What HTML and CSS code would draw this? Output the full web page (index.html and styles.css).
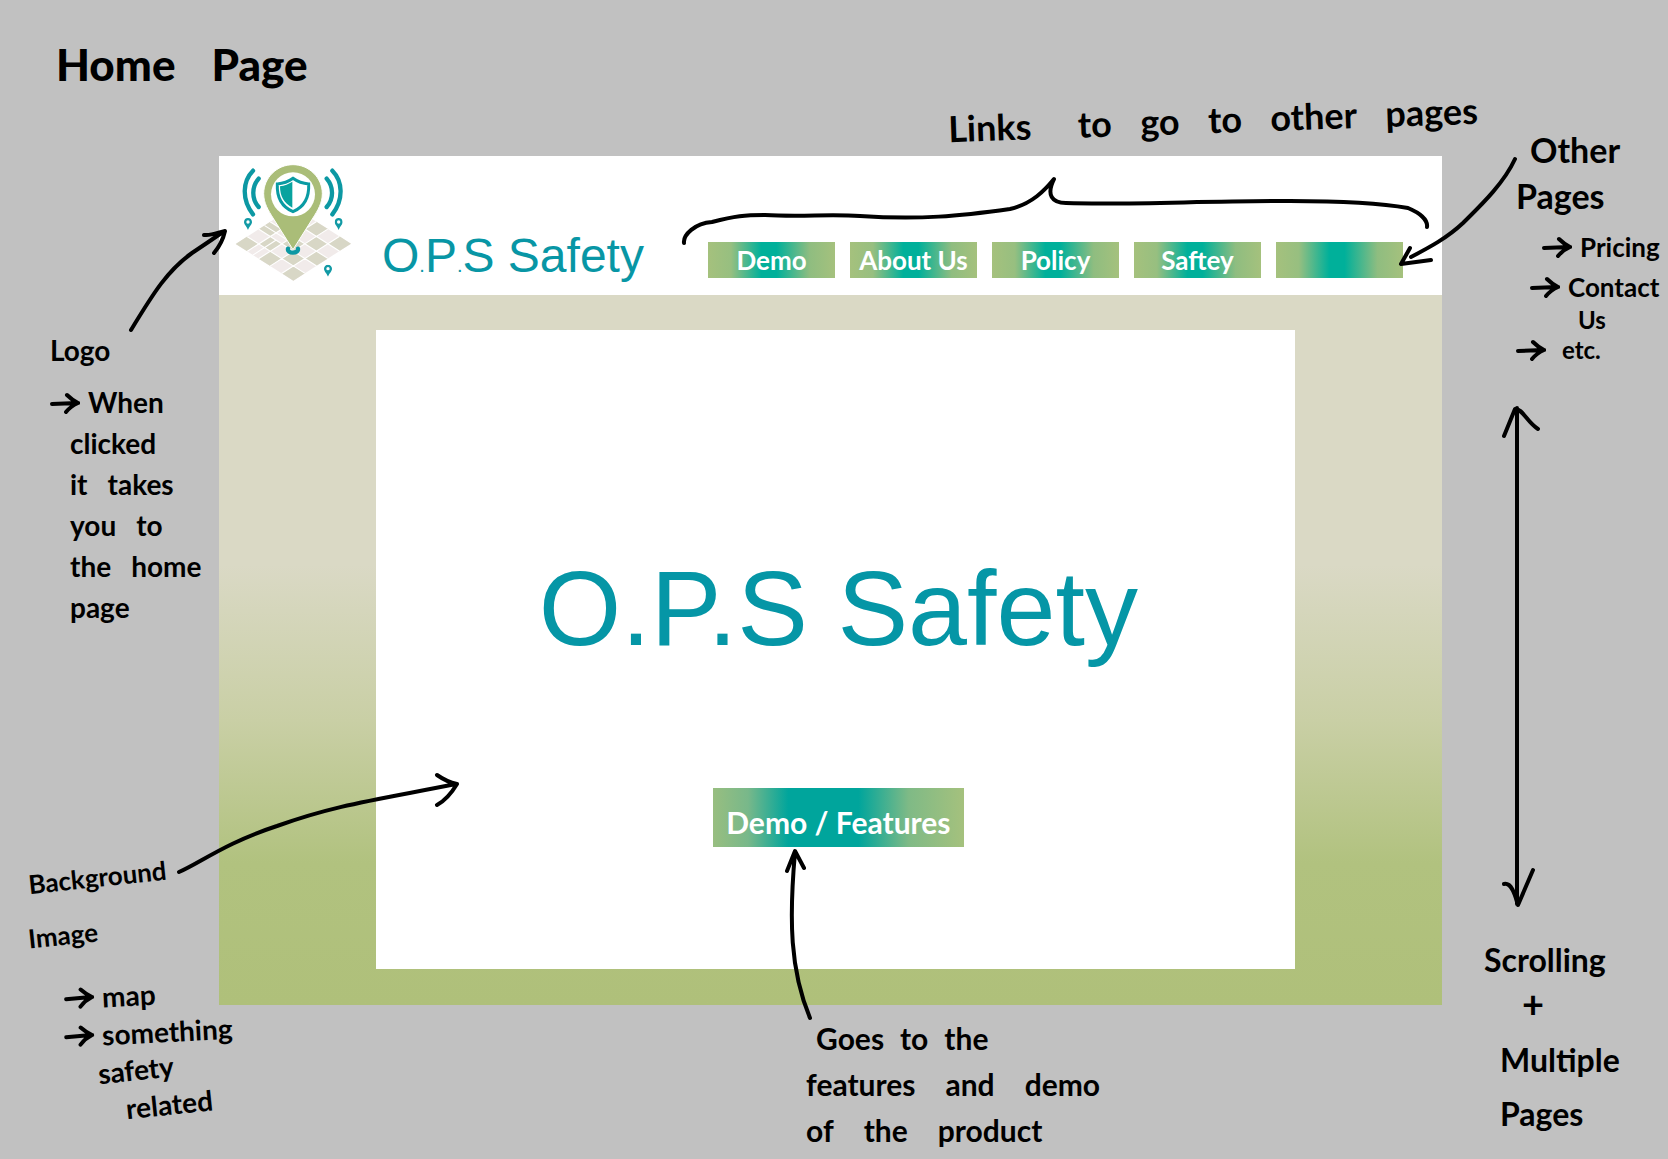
FILE: index.html
```html
<!DOCTYPE html>
<html lang="en">
<head>
<meta charset="utf-8">
<meta name="viewport" content="width=device-width, initial-scale=1">
<title>Home Page</title>
<link rel="stylesheet" href="styles.css">
</head>
<body>
<svg class="defs" aria-hidden="true">
  <symbol id="arrow" viewBox="0 0 30 24"><path d="M2 13 L27 12 M17 4 Q22 9 28 12 Q21 15 16 21"/></symbol>
  <symbol id="pin" viewBox="0 0 24 36"><path fill-rule="evenodd" d="M12 0C5 0 0 5 0 12c0 8 8 13 12 24 4-11 12-16 12-24C24 5 19 0 12 0zm0 7a5 5 0 1 1 0 10 5 5 0 0 1 0-10z"/></symbol>
</svg>
<div class="board">
  <aside class="notes notes-left">
    <h1 class="board-title"><span>Home</span> <span>Page</span></h1>
    <section class="note logo-note">
      <p class="line in-1">Logo</p>
      <p class="line in-1"><svg class="arrow"><use href="#arrow"/></svg> When</p>
      <p class="line in-2">clicked</p>
      <p class="line in-2 wide"><span>it</span> <span>takes</span></p>
      <p class="line in-2 wide"><span>you</span> <span>to</span></p>
      <p class="line in-2 wide"><span>the</span> <span>home</span></p>
      <p class="line in-2">page</p>
    </section>
    <section class="note image-note">
      <p class="line big tilt-more">Background</p>
      <p class="line big tilt-more">Image</p>
      <p class="line in-3 tilt"><svg class="arrow"><use href="#arrow"/></svg> map</p>
      <p class="line in-3 tilt"><svg class="arrow"><use href="#arrow"/></svg> something</p>
      <p class="line in-4 tilt-more">safety</p>
      <p class="line in-5 tilt-more">related</p>
    </section>
  </aside>

  <p class="links-note"><span>Links</span> <span>to</span> <span>go</span> <span>to</span> <span>other</span> <span>pages</span></p>

  <main class="mock">
    <header class="mock-header">
      <a class="brand" href="#home">
        <svg class="logo" viewBox="0 3 420 405" role="img" aria-label="O.P.S Safety logo">
          <g transform="matrix(34.6 -22.2 -34.6 -22 205 377)" class="tiles">
            <path class="pale" d="M0 0h5v5H0z"/>
            <path class="sand" d="M0 0h1v1H0zM2 0h1v1H2zM4 0h1v1H4zM1 1h1v1H1zM3 1h1v1H3zM0 2h1v1H0zM2 2h1v1H2zM4 2h1v1H4zM1 3h1v1H1zM3 3h1v1H3zM0 4h1v1H0zM2 4h1v1H2zM4 4h1v1H4z"/>
            <path class="streets" d="M1 0v5M2 0v5M3 0v5M4 0v5M0 1h5M0 2h5M0 3h5M0 4h5M2.500 3v2M0 3.500h2"/>
          </g>
          <path class="pin-body" d="M204 29c-48 0-88 39-88 87 0 28 13 49 30 76l58 92 58-92c17-27 30-48 30-76 0-48-40-87-88-87z"/>
          <circle cx="204" cy="118" r="66" fill="#fff"/>
          <path class="shield" d="M204 70c15 11 31 16 47 17 2 42-14 69-47 83-33-14-49-41-47-83 16-1 32-6 47-17z"/>
          <path fill="#08a39f" d="M202 80v78c-25-13-37-34-37-64 14-2 26-7 37-14z"/>
          <path class="waves" d="M84 47C53 78 49 133 84 178M101 71c-21 24-22 60 0 85M322 47c31 31 35 86 0 131M305 71c21 24 22 60 0 85"/>
          <path class="waves" d="M189 281c-3 16 32 16 30 0"/>
          <g fill="#129aa5"><use href="#pin" x="57" y="189" width="24" height="36"/><use href="#pin" x="329" y="189" width="24" height="36"/><use href="#pin" x="297" y="329" width="24" height="36"/></g>
        </svg>
        <span class="brand-name">O<small>.</small>P<small>.</small>S Safety</span>
      </a>
      <nav class="nav">
        <a class="tab" href="#demo">Demo</a>
        <a class="tab" href="#about">About Us</a>
        <a class="tab" href="#policy">Policy</a>
        <a class="tab" href="#safety">Saftey</a>
        <a class="tab" href="#more" aria-label="More pages"></a>
      </nav>
    </header>
    <section class="stage">
      <div class="card">
        <h2 class="card-title">O.P.S Safety</h2>
        <button class="cta" type="button">Demo / Features</button>
      </div>
    </section>
  </main>

  <section class="note demo-note">
    <p class="lead"><span>Goes</span> <span>to</span> <span>the</span></p>
    <p class="loose"><span>features</span> <span>and</span> <span>demo</span></p>
    <p class="loose"><span>of</span> <span>the</span> <span>product</span></p>
  </section>

  <aside class="notes notes-right">
    <section class="note pages-note">
      <p class="heading in-2">Other</p>
      <p class="heading in-1">Pages</p>
      <p class="line in-3"><svg class="arrow"><use href="#arrow"/></svg> Pricing</p>
      <p class="line contact in-2"><svg class="arrow"><use href="#arrow"/></svg> Contact</p>
      <p class="line short in-4">Us</p>
      <p class="line short in-1"><svg class="arrow"><use href="#arrow"/></svg> etc.</p>
    </section>
    <section class="note scroll-note">
      <p>Scrolling</p>
      <p class="plus">+</p>
      <p class="inset">Multiple</p>
      <p class="inset">Pages</p>
    </section>
  </aside>

  <svg class="pointers" viewBox="0 0 1668 1159" preserveAspectRatio="none" aria-hidden="true">
    <path d="M131 330C154 292 168 270 192 253Q207 243 223 232M204 235C212 236 219 232 225 231C223 240 219 247 214 253"/>
    <path d="M684 243C683 235 695 223 712 222C735 216 745 215 765 215C800 217 830 214 860 216C920 220 960 216 1010 209C1032 204 1045 190 1054 179C1046 195 1052 203 1066 203C1130 205 1200 201 1290 201C1340 201 1380 203 1408 208C1420 213 1428 220 1427 227"/>
    <path d="M1515 159C1503 185 1478 208 1463 223C1447 238 1430 247 1411 257M1410 248L1401 264L1431 260"/>
    <path d="M179 872C200 863 225 843 277 826C335 805 375 800 456 784M437 775Q447 782 457 784Q448 799 437 805"/>
    <path d="M810 1018C790 970 789 920 795 852M787 871L795 851L804 868"/>
    <path d="M1517 408V904M1504 436L1515 409C1522 408 1527 422 1538 429M1504 884C1513 882 1516 900 1518 905L1533 870"/>
  </svg>
</div>
</body>
</html>
```
FILE: styles.css
```css
* { box-sizing: border-box; }

body {
  margin: 0;
  background: #c1c1c1;
  color: #000;
  font: 700 28px/40px Lato, "Open Sans", sans-serif;
}

h1, h2, p { margin: 0; }
a { color: inherit; text-decoration: none; }
.defs { display: none; }

.board {
  position: relative;
  display: grid;
  grid-template-columns: 219fr 1223fr 226fr;
  grid-template-rows: 156px auto 1fr;
  min-height: 100vh;
  overflow: hidden;
  white-space: nowrap;
}

.notes { grid-row: 1 / 4; display: flex; flex-direction: column; min-width: 0; }
.notes-left { grid-column: 1; }
.notes-right { grid-column: 3; padding-top: 127px; }

.board-title {
  display: flex;
  gap: 36px;
  padding: 22px 0 0 56px;
  font-size: 44px;
  font-weight: 900;
  line-height: 84px;
}

.line { display: flex; align-items: center; gap: 8px; }
.wide { gap: 20px; }
.in-1 { padding-left: 50px; }
.in-2 { padding-left: 70px; }
.arrow {
  flex: none;
  width: 30px;
  height: 24px;
  fill: none;
  stroke: #000;
  stroke-width: 4px;
  stroke-linecap: round;
}

.logo-note { margin-top: 212px; line-height: 41px; }
.logo-note .line:first-child { height: 64px; }

.image-note { margin-top: 223px; padding-left: 28px; }
.big { margin-bottom: 6px; font-size: 26px; line-height: 52px; }
.image-note .in-3 { padding-left: 36px; }
.big + .in-3 { margin-top: 16px; }
.tilt + .tilt { line-height: 32px; }
.image-note .in-4 { padding-left: 70px; line-height: 48px; }
.image-note .in-5 { padding-left: 98px; line-height: 24px; }
.tilt, .tilt-more { width: max-content; transform: rotate(-3deg); }
.tilt-more { transform: rotate(-6deg); }

.links-note {
  grid-column: 2;
  grid-row: 1;
  align-self: end;
  display: flex;
  justify-content: space-between;
  width: 530px;
  margin: 0 -36px 14px auto;
  font-size: 36px;
  line-height: 46px;
  transform: rotate(-2deg);
}
.links-note span:first-child { padding-right: 18px; }

.mock { grid-column: 2; grid-row: 2; }

.mock-header {
  display: flex;
  justify-content: space-between;
  height: 139px;
  padding: 0 39px 0 6px;
  background: #fff;
}
.brand { display: flex; gap: 17px; }
.logo { width: 140px; height: 135px; }
.brand-name {
  padding-top: 72px;
  color: #0896a5;
  font: 48px/56px "Liberation Sans", Arial, sans-serif;
}
.brand-name small { font-size: 20px; }

.pale { fill: #f1ebea; }
.sand { fill: #d8d7c6; }
.streets { fill: none; stroke: #fff; stroke-width: .09; }
.pin-body { fill: #aabd78; stroke: #fff; stroke-width: 3; }
.shield { fill: #fff; stroke: #0a9ba3; stroke-width: 9; }
.waves { fill: none; stroke: #0c98a3; stroke-width: 13; stroke-linecap: round; }

.nav { display: flex; gap: 15px; padding-top: 86px; }
.tab {
  width: 127px;
  height: 36px;
  color: #fff;
  font-size: 26px;
  line-height: 36px;
  text-align: center;
  background: linear-gradient(90deg, #a5c17d 0%, #97bf80 18%, #00b09a 42%, #00b09a 54%, #8fbd80 80%, #a5c17d 100%);
}

.stage {
  padding: 35px 12% 36px 12.8%;
  background: linear-gradient(#dad9c5 0%, #dad9c5 38%, #c9cfa5 60%, #b1c27f 80%, #afc07a 100%);
}
.card {
  display: flex;
  flex-direction: column;
  align-items: center;
  gap: 120px;
  padding: 218px 0 122px 6px;
  background: #fff;
}
.card-title {
  color: #0596a6;
  font: 106px/120px "Liberation Sans", Arial, sans-serif;
}
.cta {
  width: 251px;
  height: 59px;
  padding: 8px 0 0;
  border: 0;
  color: #fff;
  font: inherit;
  font-size: 30px;
  background: linear-gradient(90deg, #98be80 0%, #78b88a 14%, #00a59c 30%, #00a59c 58%, #7fba86 78%, #a5c17d 100%);
}

.demo-note {
  grid-column: 2;
  grid-row: 3;
  padding: 10px 0 0 48%;
  font-size: 30px;
  line-height: 46px;
}
.demo-note p { display: flex; gap: 16px; }
.demo-note .lead { padding-left: 10px; }
.demo-note .loose { gap: 30px; }

.heading { font-size: 34px; line-height: 46px; }
.pages-note .line { font-size: 26px; }
.heading + .line { margin-top: 6px; line-height: 44px; }
.pages-note .contact { line-height: 36px; }
.pages-note .short { font-size: 24px; line-height: 30px; }
.pages-note .in-1 { padding-left: 74px; }
.pages-note .in-2 { padding-left: 88px; }
.pages-note .in-3 { padding-left: 100px; }
.pages-note .in-4 { padding-left: 136px; }
.pages-note .short.in-1 { gap: 16px; }

.scroll-note {
  margin-top: 568px;
  padding-left: 42px;
  font-size: 32px;
  line-height: 54px;
}
.scroll-note .plus { margin-bottom: 14px; padding-left: 38px; font-size: 38px; line-height: 32px; }
.scroll-note .inset { padding-left: 16px; }

.pointers {
  position: absolute;
  inset: 0;
  width: 100%;
  height: 100%;
  fill: none;
  stroke: #000;
  stroke-width: 4;
  stroke-linecap: round;
  stroke-linejoin: round;
  pointer-events: none;
}
```
